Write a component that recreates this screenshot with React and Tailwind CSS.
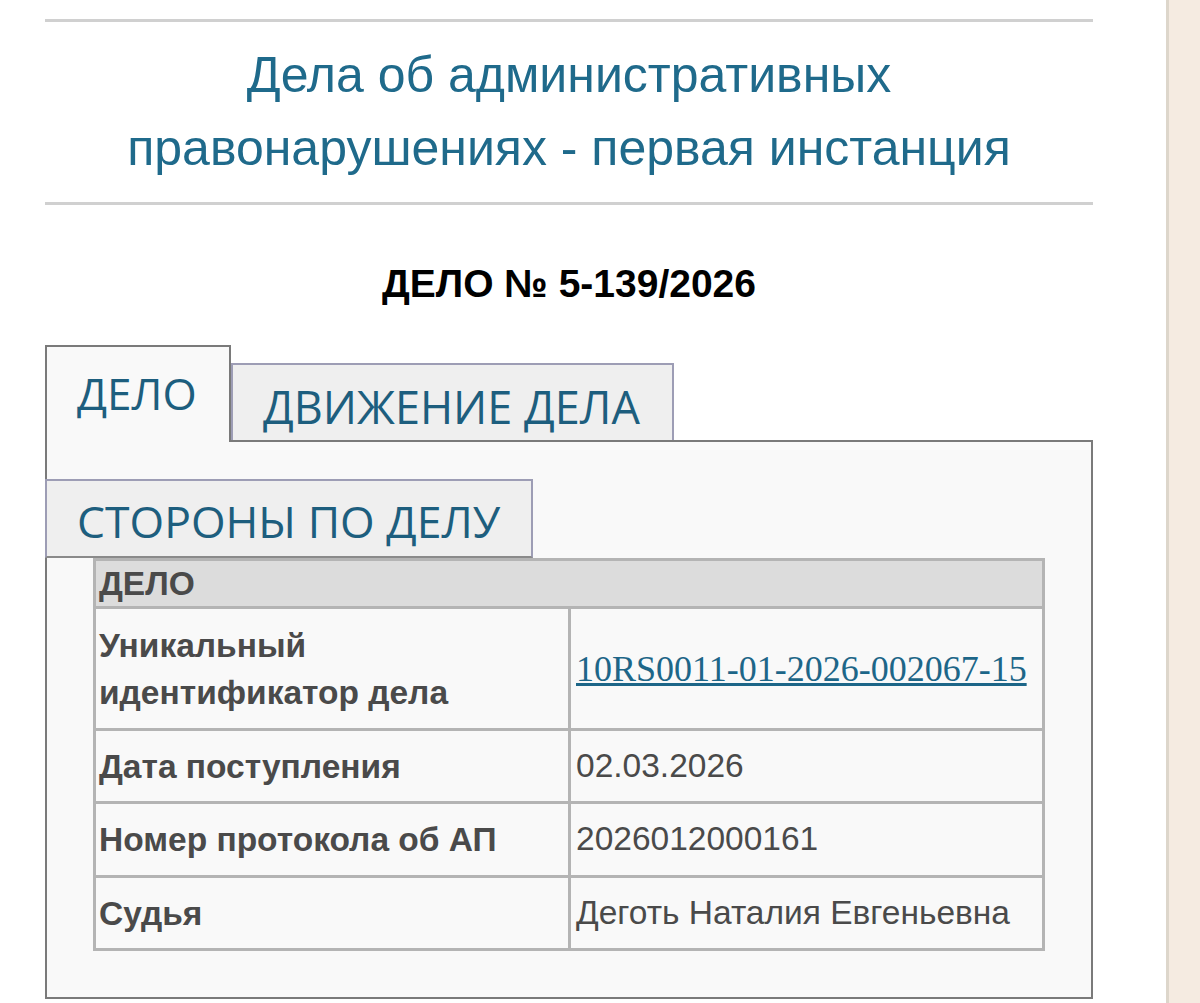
export default function App() {
  const rows = [
    { label: ['Уникальный', 'идентификатор дела'], value: '10RS0011-01-2026-002067-15', link: true, h: 'h-[122px]' },
    { label: ['Дата поступления'], value: '02.03.2026', h: 'h-[73px]' },
    { label: ['Номер протокола об АП'], value: '2026012000161', h: 'h-[74px]' },
    { label: ['Судья'], value: 'Деготь Наталия Евгеньевна', h: 'h-[73px]' },
  ]

  return (
    <div className="flex min-h-[1003px] w-[1200px] bg-white font-['Liberation_Sans',Arial,sans-serif]">
      {/* Main column */}
      <div className="w-[1166px] overflow-hidden">
        <div className="ml-[45px] w-[1048px]">
          <div className="mt-[19px] border-t-[3px] border-[#d0d0d0]" />
          <h1 className="py-[17px] text-center text-[50px] leading-[73px] text-[#1f6a8b]">
            Дела об административных
            <br />
            правонарушениях - первая инстанция
          </h1>
          <div className="border-t-[3px] border-[#d0d0d0]" />

          <h2 className="mt-[57px] text-center text-[39px] font-bold leading-[44px] text-black">
            ДЕЛО № 5-139/2026
          </h2>

          {/* Tabs */}
          <div className="mt-[39px] flex items-end font-['Open_Sans',sans-serif]">
            <div className="relative z-10 -mb-[2px] flex h-[97px] w-[186px] items-start border-2 border-b-0 border-[#7a7a7a] bg-[#f9f9f9] pl-[30px] pt-[18px] text-[44px] leading-[56px] text-[#1d5e7e]">
              ДЕЛО
            </div>
            <div className="flex h-[77px] w-[443px] items-start border-2 border-b-0 border-[#9d9db5] bg-[#efefef] pl-[30px] pt-[14px] text-[45px] leading-[56px] text-[#1d5e7e]">
              ДВИЖЕНИЕ ДЕЛА
            </div>
          </div>

          <div className="h-[559px] border-2 border-[#7a7a7a] bg-[#f9f9f9]">
            <div className="-ml-[2px] mt-[37px] flex h-[79px] w-[488px] items-start border-2 border-[#9d9db5] border-b-[#8a8a8a] bg-[#efefef] pl-[30px] pt-[12px] font-['Open_Sans',sans-serif] text-[44.5px] leading-[56px] text-[#1d5e7e]">
              СТОРОНЫ ПО ДЕЛУ
            </div>

            <table className="ml-[46px] w-[952px] border-collapse text-[33.5px] text-[#4a4a4a]">
              <thead>
                <tr className="h-[48px] bg-[#dcdcdc]">
                  <th colSpan={2} className="border-[3px] border-[#b4b4b4] px-[3px] text-left font-bold leading-[38px]">
                    ДЕЛО
                  </th>
                </tr>
              </thead>
              <tbody>
                {rows.map((r) => (
                  <tr key={r.value} className={r.h}>
                    <td className="w-[475px] border-[3px] border-[#b4b4b4] px-[3px] font-bold leading-[47px]">
                      {r.label.map((l) => (
                        <div key={l}>{l}</div>
                      ))}
                    </td>
                    <td className="border-[3px] border-[#b4b4b4] px-[5px]">
                      {r.link ? (
                        <a href="#" className="font-['Liberation_Serif',serif] text-[36px] text-[#1d6688] underline">
                          {r.value}
                        </a>
                      ) : (
                        r.value
                      )}
                    </td>
                  </tr>
                ))}
              </tbody>
            </table>
          </div>
        </div>
      </div>

      {/* Right sidebar edge */}
      <div className="w-[3px] bg-[#ddd6cb]" />
      <div className="flex-1 bg-[#f5ebe1]" />
    </div>
  )
}
